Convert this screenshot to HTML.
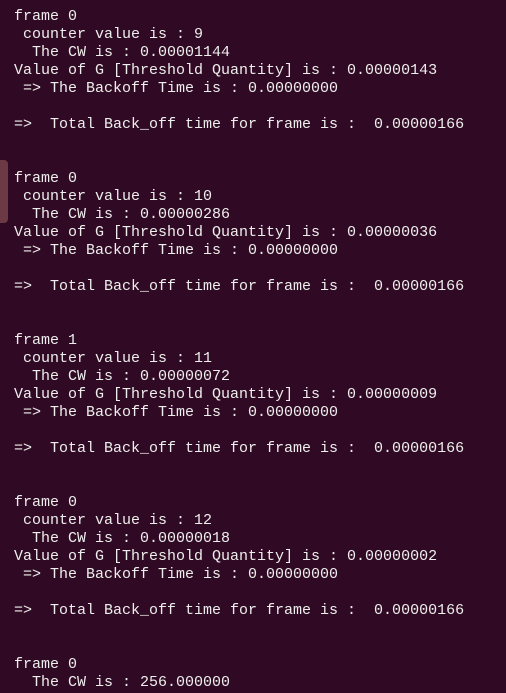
<!DOCTYPE html>
<html><head><meta charset="utf-8"><style>
html,body{margin:0;padding:0;background:#300a24;width:506px;height:693px;overflow:hidden}
pre{margin:0;position:absolute;left:14px;top:8px;font-family:"Liberation Mono","DejaVu Sans Mono",monospace;font-size:15px;line-height:18px;color:#eeeeec;white-space:pre}
.sb{position:absolute;left:0;top:160px;width:8px;height:63px;background:#6b3a45;border-radius:0 4px 4px 0}
</style></head><body>
<div class="sb"></div>
<pre>frame 0
 counter value is : 9
  The CW is : 0.00001144
Value of G [Threshold Quantity] is : 0.00000143
 =&gt; The Backoff Time is : 0.00000000

=&gt;  Total Back_off time for frame is :  0.00000166


frame 0
 counter value is : 10
  The CW is : 0.00000286
Value of G [Threshold Quantity] is : 0.00000036
 =&gt; The Backoff Time is : 0.00000000

=&gt;  Total Back_off time for frame is :  0.00000166


frame 1
 counter value is : 11
  The CW is : 0.00000072
Value of G [Threshold Quantity] is : 0.00000009
 =&gt; The Backoff Time is : 0.00000000

=&gt;  Total Back_off time for frame is :  0.00000166


frame 0
 counter value is : 12
  The CW is : 0.00000018
Value of G [Threshold Quantity] is : 0.00000002
 =&gt; The Backoff Time is : 0.00000000

=&gt;  Total Back_off time for frame is :  0.00000166


frame 0
  The CW is : 256.000000</pre>
</body></html>
